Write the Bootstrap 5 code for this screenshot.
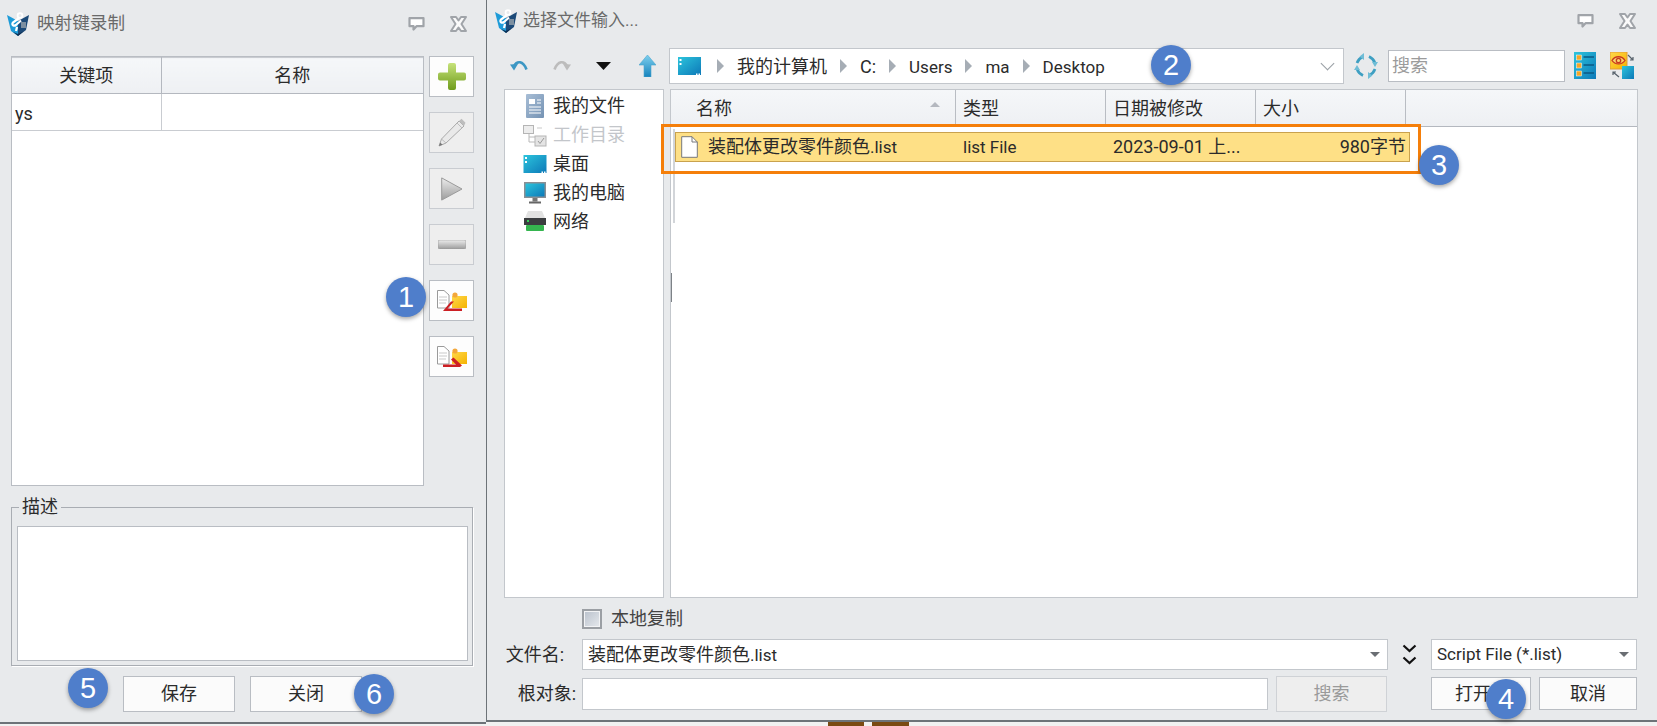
<!DOCTYPE html>
<html lang="zh-CN">
<head>
    <meta charset="UTF-8">
    <meta name="viewport" content="width=device-width, initial-scale=1.0">
    <title>选择文件输入</title>
    <link href="https://cdn.jsdelivr.net/npm/bootstrap@5.3.0/dist/css/bootstrap.min.css" rel="stylesheet">
    <style>
        html, body { margin: 0; height: 100%; overflow: hidden; }
        body { background: #f1f1f1; font-family: Roboto, "Noto Sans CJK SC", sans-serif; font-size: 18px; color: #2b2b2b; }
        svg { display: block; flex: none; }
        .latin-text { font-size: 17px; }

        .desk { position: relative; width: 1657px; height: 726px; }
        .dlg-left, .dlg-right { background: #e8eaec; border-bottom: 2px solid #6d7378; }
        .dlg-left { width: 486px; height: 724px; }
        .dlg-right { width: 1171px; height: 722px; border-left: 1px solid #6d7378; }
        .scrap { position: absolute; top: 722px; height: 4px; background: #7a4a12; }

        .title-left { height: 47px; margin-bottom: 9px; padding: 0 19px 0 7px; }
        .title-right { height: 41px; margin-bottom: 7px; padding: 0 21px 0 8px; }
        .title-text { color: #6a6a6a; line-height: 1; }
        .title-left .title-text { font-size: 17.6px; }
        .title-right .title-text { font-size: 17px; }

        /* left dialog */
        .key-box { width: 413px; height: 430px; background: #fff; border: 1px solid #b9bdc3; }
        .key-table { table-layout: fixed; margin: 0; --bs-table-border-color: #c9ccd1; color: #2b2b2b; }
        .key-table th { height: 36px; padding: 0; font-weight: 400; text-align: center; vertical-align: middle; background: linear-gradient(#f5f7f9, #eef0f3); border-color: #b4b8bf; border-bottom-width: 1px; }
        .key-table td { height: 37px; padding: 3px 3px 0; vertical-align: middle; }
        .key-table tr > *:first-child { border-left: 0; }
        .key-table tr > *:last-child { border-right: 0; }
        .tool-col { width: 45px; margin-left: 5px; gap: 15px; }
        .tool-btn { width: 45px; height: 41px; padding: 0; border-radius: 0; background: #fdfdfd; border: 1px solid #b9bdc3; }
        .tool-btn:disabled { background: #eeeeee; border-color: #c9ccd1; opacity: 1; }

        .desc-set { width: 462px; margin: 11px 0 0 11px; padding: 0 4px 4px 5px; border: 1px solid #a9adb3; box-shadow: 1px 1px 0 #fff; }
        .desc-set legend { float: none; width: auto; margin: 0 0 0 2px; padding: 0 3px; font-size: 18px; line-height: 20px; }
        .desc-area { display: block; height: 135px; margin-top: 9px; border-radius: 0; border-color: #b9bdc3; resize: none; }
        .dlg-btn { height: 36px; padding: 0; border-radius: 0; background: #fbfbfb; border: 1px solid #b9bdc3; font-size: 18px; color: #2b2b2b; line-height: 1; }
        .left-actions { padding-left: 123px; margin-top: 10px; gap: 15px; }
        .left-actions .dlg-btn { width: 112px; }

        /* right dialog: toolbar */
        .toolbar { height: 35px; }
        .path-bar { width: 675px; height: 36px; margin-left: 13px; padding: 0 8px 0 8px; gap: 13px; background: #fff; border: 1px solid #c3c7cc; }
        .path-text { padding-top: 3px; line-height: 1; }
        .path-arrow { width: 0; height: 0; border-style: solid; border-width: 7px 0 7px 7px; border-color: transparent transparent transparent #a6adb5; }
        .path-chevron { width: 9px; height: 9px; margin: -4px 3px 0 0; border-right: 1px solid #9aa0a6; border-bottom: 1px solid #9aa0a6; transform: rotate(45deg) scale(1.1); }
        .search-box { width: 177px; height: 32px; padding: 0 3px; border-radius: 0; border-color: #b9bdc3; font-size: 18px; }
        .search-box::placeholder { color: #9b9b9b; }

        /* right dialog: panes */
        .panes { height: 509px; margin-top: 6px; padding-left: 17px; gap: 6px; }
        .side-pane { width: 160px; padding-top: 1px; background: #fff; border: 1px solid #c3c7cc; border-radius: 0; }
        .side-pane .list-group-item { height: 29px; padding: 0 0 0 18px; gap: 6px; border: 0; border-radius: 0; background: transparent; color: inherit; line-height: 1; }
        .side-pane .list-group-item.disabled { color: #c3c6ca; background: transparent; }
        .icon-cell { width: 24px; }
        .file-pane { position: relative; width: 968px; background: #fff; border: 1px solid #c3c7cc; }
        .file-head { height: 37px; background: linear-gradient(#f5f7f9, #eef0f3); border-bottom: 1px solid #b4b8bf; }
        .head-cell { height: 100%; padding-left: 7px; border-right: 1px solid #b9bdc3; }
        .cell-name { width: 285px; padding-left: 25px; }
        .cell-mid { width: 150px; }
        .sort-mark { width: 0; height: 0; margin: -8px 15px 0 auto; border-style: solid; border-width: 0 5px 5px; border-color: transparent transparent #b4b8bf; }
        .file-row { width: 735px; height: 30px; margin: 5px 0 0 4px; background: #fee086; border: 1px solid #c9a24e; line-height: 1; }
        .row-name { width: 280px; padding-left: 5px; gap: 10px; }
        .row-type { width: 150px; padding-left: 7px; }
        .row-date { width: 142px; padding-left: 7px; }
        .row-size { flex: 1; padding-right: 3px; text-align: right; }
        .split-mark { position: absolute; left: 2px; width: 2px; }
        .split-light { top: 39px; height: 94px; background: #d2d5d9; }
        .split-dark { top: 183px; height: 29px; left: 0; width: 1px; background: #7d8287; }
        .pick-frame { position: absolute; left: -10px; top: 34px; width: 760px; height: 50px; border: 3px solid #f57f0a; }

        /* right dialog: form rows */
        .copy-row { height: 20px; margin-top: 11px; padding-left: 95px; gap: 9px; line-height: 1; color: #444; }
        .copy-check { width: 20px; height: 20px; border: 2px solid #9b9fa4; background: linear-gradient(135deg, #b9c1cc, #e6e9ed); box-shadow: inset 0 0 0 1px #f2f3f5; }
        .form-row { height: 31px; line-height: 1; }
        .name-row { margin-top: 10px; }
        .root-row { margin-top: 8px; }
        .form-label-cell { width: 95px; text-align: right; }
        .name-row .form-label-cell { padding-right: 18px; }
        .root-row .form-label-cell { padding-right: 6px; }
        .combo { height: 31px; padding: 0 7px 0 5px; background: #fff; border: 1px solid #c3c7cc; }
        .combo-caret { width: 0; height: 0; margin-left: auto; border-style: solid; border-width: 5px 5px 0; border-color: #6a6e73 transparent transparent; }
        .root-input { width: 686px; height: 32px; padding: 0 5px; border-radius: 0; border-color: #c3c7cc; }
        .side-search { width: 111px; margin-left: 8px; }
        .side-search:disabled { background: #eeeeee; border-color: #cfd2d6; color: #9a9a9a; opacity: 1; }
        .open-btn, .cancel-btn { height: 33px; }
        .open-btn { width: 100px; margin-left: 44px; padding-right: 16px; }
        .cancel-btn { width: 98px; margin-left: 8px; }

        /* numbered callouts */
        .callout { position: absolute; display: flex; align-items: center; justify-content: center; width: 40px; height: 40px; border-radius: 50%; background: #4f7ecb; color: #fff; font-family: "Liberation Sans", sans-serif; font-size: 29px; line-height: 1; box-shadow: 0 2px 4px rgba(0,0,0,.35); }
    </style>
</head>
<body>
    <svg width="0" height="0" style="position:absolute">
        <defs>
            <linearGradient id="gBlue" x1="0" y1="0" x2="1" y2="1"><stop offset="0" stop-color="#2cc4dc"/><stop offset="1" stop-color="#0d79b8"/></linearGradient>
            <linearGradient id="gUp" x1="0" y1="0" x2="0" y2="1"><stop offset="0" stop-color="#7fd0ee"/><stop offset="1" stop-color="#1583bd"/></linearGradient>
            <linearGradient id="gGreen" x1="0" y1="0" x2="0" y2="1"><stop offset="0" stop-color="#c6e27a"/><stop offset="1" stop-color="#6f9c1c"/></linearGradient>
            <linearGradient id="gGrey" x1="0" y1="0" x2="0" y2="1"><stop offset="0" stop-color="#ececec"/><stop offset="1" stop-color="#9c9c9c"/></linearGradient>
            <linearGradient id="gYellow" x1="0" y1="0" x2="1" y2="1"><stop offset="0" stop-color="#ffd84a"/><stop offset="1" stop-color="#f5b301"/></linearGradient>
            <linearGradient id="gDoc" x1="0" y1="0" x2="1" y2="1"><stop offset="0" stop-color="#a8bed6"/><stop offset="1" stop-color="#7492b3"/></linearGradient>

            <symbol id="logo" viewBox="0 0 22 24">
                <path d="M0 3 11 9V24L4 19Z" fill="#1d9bd8"/>
                <path d="M22 3 11 9V24L19 18Z" fill="#1c4a78"/>
                <path d="M11 24 6 20 11 22 17 19Z" fill="#0d2f52"/>
                <rect x="14" y="10" width="5" height="6" fill="#7c8fa0"/>
                <circle cx="13" cy="3.500" r="2.400" fill="none" stroke="#fff" stroke-width="1.800"/>
                <path d="M12 6 6 10.500c-2 2.500 1 4 3 2.500l5-4.500M10 15l-1 4" fill="none" stroke="#fff" stroke-width="2.200"/>
            </symbol>
            <symbol id="bubble" viewBox="0 0 17 14">
                <path d="M1.500 1.200h14v8H8.500L5.500 12.500V9.200H1.500Z" fill="#fff" stroke="#a0a4a9" stroke-width="2.200" stroke-linejoin="round"/>
            </symbol>
            <symbol id="closeX" viewBox="0 0 17 16">
                <path d="M1 1H6L8.500 4.500 11 1H16L11.500 8 16 15H11L8.500 11.500 6 15H1L5.500 8Z" fill="#fafafa" stroke="#a0a4a9" stroke-width="2" stroke-linejoin="round"/>
            </symbol>
            <symbol id="screen" viewBox="0 0 23 18">
                <rect width="23" height="18" fill="url(#gBlue)"/>
                <rect x="1.500" y="2" width="2" height="2" fill="#fff"/><rect x="1.500" y="6" width="2" height="2" fill="#fff"/>
                <rect x="18" y="16.500" width="1.500" height="1.500" fill="#fff"/><rect x="20.500" y="16.500" width="1.500" height="1.500" fill="#fff"/>
            </symbol>
            <symbol id="docPage" viewBox="0 0 17 22">
                <path d="M.7.7H11L16.300 6V21.300H.7Z" fill="#fff" stroke="#77797c"/>
                <path d="M11 .7V6H16.300" fill="none" stroke="#77797c"/>
            </symbol>
            <symbol id="docFolder1" viewBox="0 0 30 21">
                <path d="M.5 .5H7L12 5V18H.5Z" fill="#fff" stroke="#9a9a9a"/>
                <path d="M2 7H10M2 10H10M2 13H9" stroke="#c9c9c9"/>
                <rect x="15" y="6" width="15" height="12" fill="url(#gYellow)"/>
                <circle cx="18" cy="5" r="2.600" fill="#f3a73a"/>
                <path d="M6 21 14 11.500H17L10.500 18.500H25V21Z" fill="#cc1f24"/>
            </symbol>
            <symbol id="docFolder2" viewBox="0 0 30 21">
                <path d="M.5 .5H7L12 5V18H.5Z" fill="#fff" stroke="#9a9a9a"/>
                <path d="M2 7H10M2 10H10M2 13H9" stroke="#c9c9c9"/>
                <rect x="15" y="6" width="15" height="12" fill="url(#gYellow)"/>
                <circle cx="18" cy="5" r="2.600" fill="#f3a73a"/>
                <path d="M6 18.500H19L14 13.500 16.500 11.500 25 19.500 23 21H6Z" fill="#cc1f24"/>
            </symbol>
        </defs>
    </svg>

    <div class="desk d-flex align-items-start">
        <!-- 映射键录制 -->
        <section class="dlg-left">
            <div class="title-left d-flex align-items-center">
                <svg width="22" height="24" class="me-2"><use href="#logo"/></svg>
                <span class="title-text">映射键录制</span>
                <svg width="17" height="14" class="ms-auto"><use href="#bubble"/></svg>
                <svg width="17" height="16" style="margin-left:25px"><use href="#closeX"/></svg>
            </div>

            <div class="d-flex" style="padding-left:11px">
                <div class="key-box">
                    <table class="table table-bordered key-table">
                        <colgroup><col style="width:149px"><col></colgroup>
                        <thead><tr><th>关键项</th><th>名称</th></tr></thead>
                        <tbody><tr><td>ys</td><td></td></tr></tbody>
                    </table>
                </div>
                <div class="tool-col d-flex flex-column">
                    <button type="button" class="btn tool-btn d-flex align-items-center justify-content-center">
                        <svg width="28" height="27" viewBox="0 0 28 27"><path d="M10 2a2 2 0 0 1 2-2h4a2 2 0 0 1 2 2v7.500H26a2 2 0 0 1 2 2v4a2 2 0 0 1-2 2H18v7.500a2 2 0 0 1-2 2h-4a2 2 0 0 1-2-2V17.500H2a2 2 0 0 1-2-2v-4a2 2 0 0 1 2-2h8Z" fill="url(#gGreen)"/></svg>
                    </button>
                    <button type="button" class="btn tool-btn d-flex align-items-center justify-content-center" disabled>
                        <svg width="28" height="29" viewBox="0 0 28 29"><path d="M21 3 26 8 8 25 1 28 3.500 21Z" fill="#e9e9e9" stroke="#a9a9a9"/><path d="M3.500 21 8 25M19 5 24 10" stroke="#bdbdbd"/><path d="M21 3 23.500 .8 27.500 4.800 26 8Z" fill="#bdbdbd"/><path d="M1 28 2.200 24.500 4.500 26.800Z" fill="#777"/></svg>
                    </button>
                    <button type="button" class="btn tool-btn d-flex align-items-center justify-content-center" disabled>
                        <svg width="22" height="24" viewBox="0 0 22 24"><path d="M.7 .9 21 12 .7 23.100Z" fill="url(#gGrey)" stroke="#9a9a9a"/></svg>
                    </button>
                    <button type="button" class="btn tool-btn d-flex align-items-center justify-content-center" disabled>
                        <svg width="28" height="9" viewBox="0 0 28 9"><rect width="28" height="9" rx="2" fill="url(#gGrey)" stroke="#999" stroke-width=".6"/></svg>
                    </button>
                    <button type="button" class="btn tool-btn d-flex align-items-center justify-content-center">
                        <svg width="30" height="21"><use href="#docFolder1"/></svg>
                    </button>
                    <button type="button" class="btn tool-btn d-flex align-items-center justify-content-center">
                        <svg width="30" height="21"><use href="#docFolder2"/></svg>
                    </button>
                </div>
            </div>

            <fieldset class="desc-set">
                <legend>描述</legend>
                <textarea class="form-control desc-area"></textarea>
            </fieldset>

            <div class="left-actions d-flex">
                <button type="button" class="btn dlg-btn">保存</button>
                <button type="button" class="btn dlg-btn">关闭</button>
            </div>
        </section>

        <!-- 选择文件输入 -->
        <section class="dlg-right">
            <div class="title-right d-flex align-items-center">
                <svg width="22" height="24" style="margin-right:6px"><use href="#logo"/></svg>
                <span class="title-text">选择文件输入...</span>
                <svg width="17" height="14" class="ms-auto"><use href="#bubble"/></svg>
                <svg width="17" height="16" style="margin-left:25px"><use href="#closeX"/></svg>
            </div>

            <div class="toolbar d-flex align-items-center">
                <svg width="18" height="11" viewBox="0 0 18 11" style="margin-left:23px"><path d="M4 6C7 .5 13 .5 16.500 9.500" fill="none" stroke="#3c97c4" stroke-width="2.600"/><path d="M0 4.500 8 4 4 10.500Z" fill="#3c97c4"/></svg>
                <svg width="18" height="11" viewBox="0 0 18 11" style="margin-left:25px"><path d="M14 6C11 .5 5 .5 1.500 9.500" fill="none" stroke="#bcbcbc" stroke-width="2.600"/><path d="M18 4.500 10 4 14 10.500Z" fill="#bcbcbc"/></svg>
                <svg width="15" height="8" viewBox="0 0 15 8" style="margin-left:25px"><path d="M0 0H15L7.500 8Z" fill="#111"/></svg>
                <svg width="17" height="22" viewBox="0 0 17 22" style="margin-left:28px"><path d="M8.500 0 17 10H12V22H5V10H0Z" fill="url(#gUp)" stroke="#4ba6cf" stroke-width=".6"/></svg>

                <div class="path-bar d-flex align-items-center">
                    <svg width="23" height="18" style="margin-right:3px"><use href="#screen"/></svg>
                    <span class="path-arrow"></span><span class="path-text">我的计算机</span>
                    <span class="path-arrow"></span><span class="path-text">C:</span>
                    <span class="path-arrow"></span><span class="path-text latin-text">Users</span>
                    <span class="path-arrow"></span><span class="path-text latin-text">ma</span>
                    <span class="path-arrow"></span><span class="path-text latin-text">Desktop</span>
                    <span class="path-chevron ms-auto"></span>
                </div>

                <svg width="24" height="28" viewBox="0 0 24 28" style="margin-left:10px"><g fill="none" stroke="#3e9fc2" stroke-width="2.600"><path d="M3 11C4 8 6 6 9 4.500M15 4.500C18 6 20 8 21 11M21 17C20 20 18 22 15 23.500M9 23.500C6 22 4 20 3 17"/></g><g fill="#6fbdd6"><path d="M10 1V8L5.500 4.500ZM14 27V20L18.500 23.500ZM24 10H18L21 15ZM0 18H6L3 13Z"/></g></svg>
                <input type="text" class="form-control search-box" placeholder="搜索" style="margin-left:10px">
                <svg width="22" height="27" viewBox="0 0 22 27" style="margin-left:9px"><rect width="22" height="27" fill="url(#gBlue)"/><g fill="#f6a623" stroke="#fff" stroke-width=".5"><rect x="2.500" y="3" width="5" height="5"/><rect x="2.500" y="11" width="5" height="5"/><rect x="2.500" y="19" width="5" height="5"/></g><path d="M9.500 5H20M9.500 13H20M9.500 21H20" stroke="#0b5a85" stroke-width="1.500"/></svg>
                <svg width="24" height="27" viewBox="0 0 24 27" style="margin-left:14px"><rect x="0" y="0" width="17" height="17" fill="url(#gYellow)" stroke="#e39a3a"/><rect x="12" y="14" width="12" height="13" fill="url(#gBlue)"/><path d="M2 8.500C5 3.500 12 3.500 15 8.500 12 13 5 13 2 8.500Z" fill="#f8d56b" stroke="#c9381f" stroke-width="1.300"/><circle cx="8.500" cy="8.500" r="2.200" fill="none" stroke="#c9381f" stroke-width="1.300"/><path d="M18 3 23 8M23 5V8H20M9 25 3 20M3 23V20H6" fill="none" stroke="#55606a" stroke-width="1.200"/></svg>
            </div>

            <div class="panes d-flex">
                <div class="side-pane list-group">
                    <div class="list-group-item d-flex align-items-center">
                        <span class="icon-cell d-flex justify-content-center"><svg width="18" height="24" viewBox="0 0 18 24"><rect width="18" height="24" rx="1" fill="url(#gDoc)"/><rect x="3" y="5" width="6" height="5" fill="#fff"/><path d="M11 6H15M11 9H15M3 13H15M3 16H15M3 19H15" stroke="#fff"/></svg></span>
                        <span>我的文件</span>
                    </div>
                    <div class="list-group-item disabled d-flex align-items-center">
                        <span class="icon-cell d-flex justify-content-center"><svg width="24" height="24" viewBox="0 0 24 24"><path d="M6 10V19H12M6 14H12" fill="none" stroke="#b9b9b9"/><rect x=".5" y="2.500" width="10" height="8" fill="#ededed" stroke="#b5b5b5"/><path d="M14 5H19" stroke="#c9c9c9"/><rect x="12" y="13" width="11" height="10" fill="#e4e4e4" stroke="#b5b5b5"/><path d="M15 18 17 20.500 21 15" fill="none" stroke="#999"/></svg></span>
                        <span>工作目录</span>
                    </div>
                    <div class="list-group-item d-flex align-items-center">
                        <span class="icon-cell d-flex justify-content-center"><svg width="24" height="18"><use href="#screen"/></svg></span>
                        <span>桌面</span>
                    </div>
                    <div class="list-group-item d-flex align-items-center">
                        <span class="icon-cell d-flex justify-content-center"><svg width="22" height="22" viewBox="0 0 22 22"><rect width="22" height="16" fill="#8a8f94"/><rect x="1.500" y="1.500" width="19" height="13" fill="url(#gBlue)"/><rect x="8.500" y="16" width="5" height="3.500" fill="#777"/><rect x="5" y="19.500" width="12" height="2" fill="#666"/></svg></span>
                        <span>我的电脑</span>
                    </div>
                    <div class="list-group-item d-flex align-items-center">
                        <span class="icon-cell d-flex justify-content-center"><svg width="22" height="21" viewBox="0 0 22 21"><path d="M4 0H18L21 7H1Z" fill="#e2e2e2"/><rect x="0" y="7" width="22" height="7" fill="#3b3d40"/><rect x="3" y="9" width="2" height="2" fill="#37d05a"/><rect x="2" y="14" width="18" height="6" rx="1" fill="#35b54f"/></svg></span>
                        <span>网络</span>
                    </div>
                </div>

                <div class="file-pane">
                    <div class="file-head d-flex align-items-center">
                        <div class="head-cell cell-name d-flex align-items-center"><span>名称</span><span class="sort-mark"></span></div>
                        <div class="head-cell cell-mid d-flex align-items-center">类型</div>
                        <div class="head-cell cell-mid d-flex align-items-center">日期被修改</div>
                        <div class="head-cell cell-mid d-flex align-items-center">大小</div>
                    </div>
                    <div class="file-row d-flex align-items-center">
                        <div class="row-name d-flex align-items-center"><svg width="17" height="22"><use href="#docPage"/></svg><span>装配体更改零件颜色<span class="latin-text">.list</span></span></div>
                        <div class="row-type latin-text">list File</div>
                        <div class="row-date">2023-09-01 上...</div>
                        <div class="row-size">980字节</div>
                    </div>
                    <span class="split-mark split-light"></span>
                    <span class="split-mark split-dark"></span>
                    <span class="pick-frame"></span>
                </div>
            </div>

            <div class="copy-row d-flex align-items-center">
                <span class="copy-check"></span>
                <span>本地复制</span>
            </div>

            <div class="form-row name-row d-flex align-items-center">
                <span class="form-label-cell">文件名:</span>
                <div class="combo d-flex align-items-center" style="width:806px"><span>装配体更改零件颜色<span class="latin-text">.list</span></span><span class="combo-caret"></span></div>
                <svg width="15" height="21" viewBox="0 0 15 21" style="margin:0 14px"><path d="M1.500 1.500 7.500 7 13.500 1.500M1.500 13.500 7.500 19 13.500 13.500" fill="none" stroke="#111" stroke-width="2.200"/></svg>
                <div class="combo d-flex align-items-center" style="width:206px"><span class="latin-text">Script File (*.list)</span><span class="combo-caret"></span></div>
            </div>

            <div class="form-row root-row d-flex align-items-center">
                <span class="form-label-cell">根对象:</span>
                <input type="text" class="form-control root-input">
                <button type="button" class="btn dlg-btn side-search" disabled>搜索</button>
                <button type="button" class="btn dlg-btn open-btn">打开</button>
                <button type="button" class="btn dlg-btn cancel-btn">取消</button>
            </div>
        </section>

        <span class="scrap" style="left:828px;width:36px"></span>
        <span class="scrap" style="left:872px;width:37px"></span>

        <span class="callout" style="left:386px;top:277px">1</span>
        <span class="callout" style="left:1151px;top:45px">2</span>
        <span class="callout" style="left:1419px;top:145px">3</span>
        <span class="callout" style="left:1486px;top:679px">4</span>
        <span class="callout" style="left:68px;top:668px">5</span>
        <span class="callout" style="left:354px;top:674px">6</span>
    </div>

    <script src="https://cdn.jsdelivr.net/npm/bootstrap@5.3.0/dist/js/bootstrap.bundle.min.js"></script>
</body>
</html>
